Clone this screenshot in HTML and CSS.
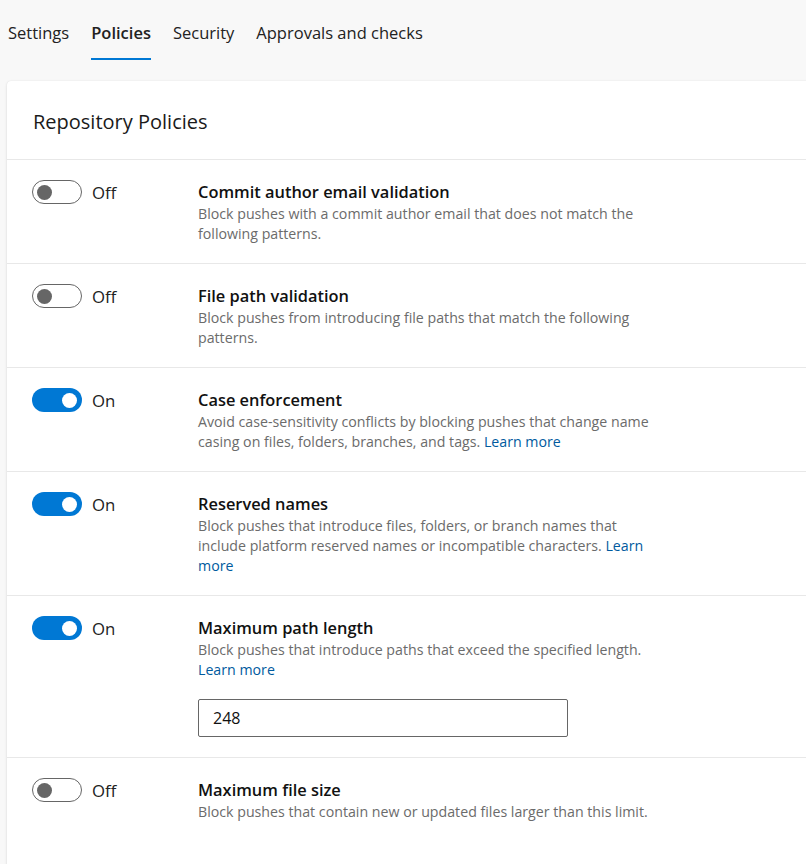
FILE: index.html
```html
<!DOCTYPE html>
<html lang="en">
<head>
<meta charset="utf-8">
<title>Repository Policies</title>
<link rel="stylesheet" href="styles.css">
</head>
<body>
<nav class="tabs">
  <span class="tab">Settings</span>
  <span class="tab active">Policies</span>
  <span class="tab">Security</span>
  <span class="tab">Approvals and checks</span>
</nav>
<section class="card">
  <h1 class="card-title">Repository Policies</h1>
  <div class="row">
    <div class="toggle-cell"><span class="toggle off"><span class="knob"></span></span><span class="state">Off</span></div>
    <div class="info">
      <div class="title">Commit author email validation</div>
      <div class="desc">Block pushes with a commit author email that does not match the following patterns.</div>
    </div>
  </div>
  <div class="row">
    <div class="toggle-cell"><span class="toggle off"><span class="knob"></span></span><span class="state">Off</span></div>
    <div class="info">
      <div class="title">File path validation</div>
      <div class="desc">Block pushes from introducing file paths that match the following patterns.</div>
    </div>
  </div>
  <div class="row">
    <div class="toggle-cell"><span class="toggle on"><span class="knob"></span></span><span class="state">On</span></div>
    <div class="info">
      <div class="title">Case enforcement</div>
      <div class="desc">Avoid case-sensitivity conflicts by blocking pushes that change name casing on files, folders, branches, and tags. <a class="link" href="#">Learn more</a></div>
    </div>
  </div>
  <div class="row">
    <div class="toggle-cell"><span class="toggle on"><span class="knob"></span></span><span class="state">On</span></div>
    <div class="info">
      <div class="title">Reserved names</div>
      <div class="desc">Block pushes that introduce files, folders, or branch names that include platform reserved names or incompatible characters. <a class="link" href="#">Learn more</a></div>
    </div>
  </div>
  <div class="row">
    <div class="toggle-cell"><span class="toggle on"><span class="knob"></span></span><span class="state">On</span></div>
    <div class="info">
      <div class="title">Maximum path length</div>
      <div class="desc">Block pushes that introduce paths that exceed the specified length. <a class="link" href="#">Learn more</a></div>
      <div class="field">248</div>
    </div>
  </div>
  <div class="row last">
    <div class="toggle-cell"><span class="toggle off"><span class="knob"></span></span><span class="state">Off</span></div>
    <div class="info">
      <div class="title">Maximum file size</div>
      <div class="desc">Block pushes that contain new or updated files larger than this limit.</div>
    </div>
  </div>
</section>
</body>
</html>
```
FILE: styles.css
```css
html, body {
  margin: 0;
  padding: 0;
  overflow: hidden;
}
body {
  background: #f8f8f8;
  font-family: "Open Sans", "Noto Sans", sans-serif;
  color: #1e1e1e;
  padding-left: 7px;
}
.tabs {
  display: flex;
  gap: 22px;
  padding-left: 1px;
}
.tab {
  font-size: 16.5px;
  line-height: 24px;
  padding-top: 21px;
  padding-bottom: 13px;
  border-bottom: 2px solid transparent;
  color: #222;
}
.tab.active {
  font-weight: 600;
  border-bottom-color: #0078d4;
}
.card {
  margin-top: 21px;
  width: 830px;
  background: #fff;
  border-radius: 4px 0 0 0;
  box-shadow: 0 1px 3px rgba(0,0,0,0.12), 0 0 1px rgba(0,0,0,0.1);
  padding-bottom: 40px;
}
.card-title {
  margin: 0;
  font-size: 20px;
  font-weight: 400;
  line-height: 28px;
  padding: 27px 26px 23px;
  border-bottom: 1px solid #e8e8e8;
  color: #1a1a1a;
}
.row {
  display: flex;
  padding: 20px 0 19px 25px;
  border-bottom: 1px solid #e8e8e8;
}
.row.last { border-bottom: none; }
.toggle-cell {
  width: 166px;
  flex: none;
  display: flex;
  align-items: flex-start;
  gap: 10px;
}
.toggle {
  box-sizing: border-box;
  width: 50px;
  height: 24px;
  border-radius: 12px;
  display: flex;
  align-items: center;
  padding: 0 5px;
}
.toggle .knob {
  width: 15px;
  height: 15px;
  border-radius: 50%;
}
.toggle.off {
  border: 1px solid #666;
  background: #fff;
  padding: 0 4px;
}
.toggle.off .knob { background: #666; }
.toggle.on {
  background: #0078d4;
  justify-content: flex-end;
}
.toggle.on .knob { background: #fff; }
.state {
  font-size: 16.8px;
  line-height: 25px;
  color: #222;
}
.info {
  width: 460px;
}
.title {
  font-size: 16.4px;
  font-weight: 600;
  line-height: 24px;
  color: #111;
}
.desc {
  font-size: 14.2px;
  line-height: 20px;
  color: #6b6b6b;
}
.link {
  color: #005a9e;
  text-decoration: none;
}
.field {
  box-sizing: border-box;
  margin-top: 19px;
  margin-bottom: 1px;
  width: 370px;
  height: 38px;
  border: 1px solid #666;
  border-radius: 2px;
  padding: 0 14px;
  font-size: 16px;
  line-height: 36px;
  color: #111;
}
```
